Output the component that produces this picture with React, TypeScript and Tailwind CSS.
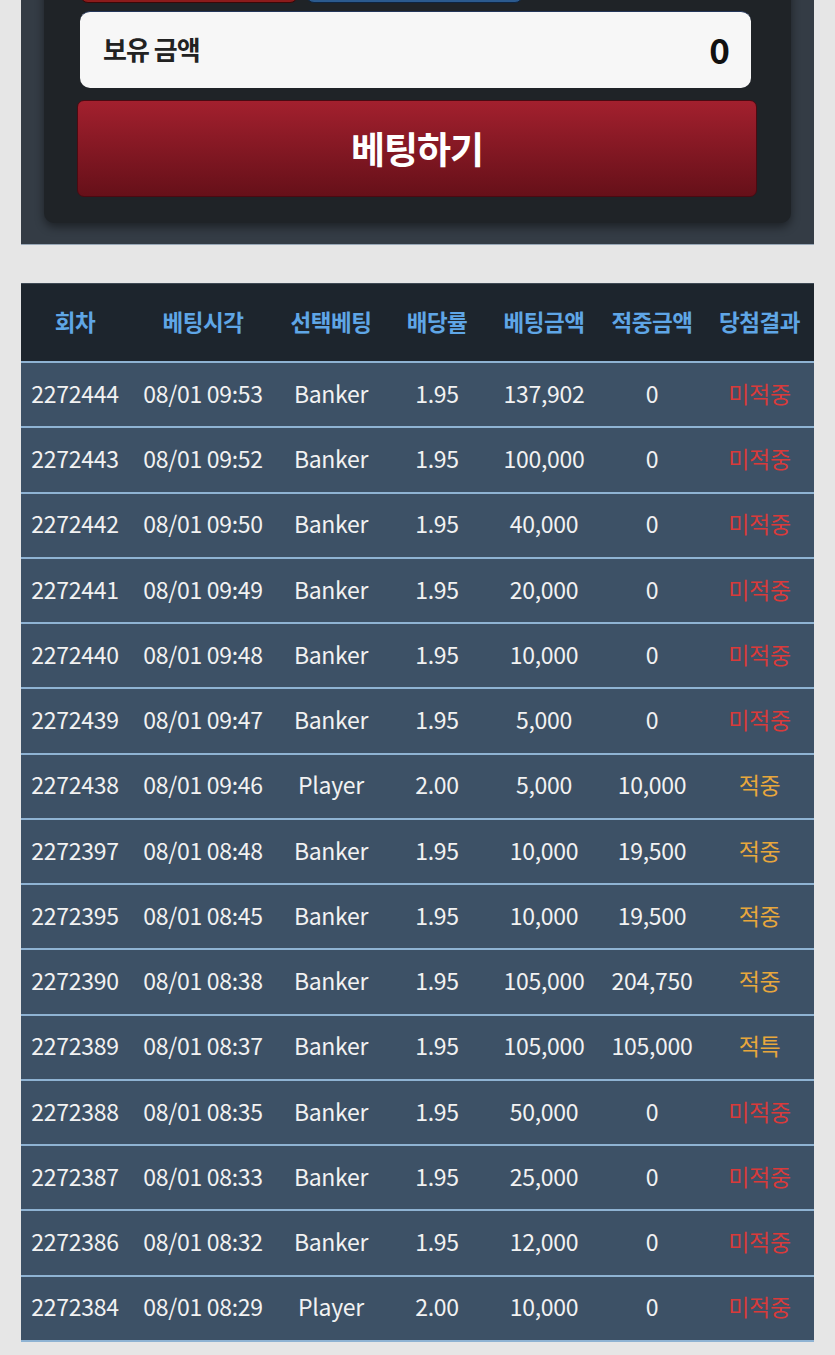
import React from "react";

type Row = [string, string, string, string, string, string, string];

const rows: Row[] = [
  ["2272444", "08/01 09:53", "Banker", "1.95", "137,902", "0", "미적중"],
  ["2272443", "08/01 09:52", "Banker", "1.95", "100,000", "0", "미적중"],
  ["2272442", "08/01 09:50", "Banker", "1.95", "40,000", "0", "미적중"],
  ["2272441", "08/01 09:49", "Banker", "1.95", "20,000", "0", "미적중"],
  ["2272440", "08/01 09:48", "Banker", "1.95", "10,000", "0", "미적중"],
  ["2272439", "08/01 09:47", "Banker", "1.95", "5,000", "0", "미적중"],
  ["2272438", "08/01 09:46", "Player", "2.00", "5,000", "10,000", "적중"],
  ["2272397", "08/01 08:48", "Banker", "1.95", "10,000", "19,500", "적중"],
  ["2272395", "08/01 08:45", "Banker", "1.95", "10,000", "19,500", "적중"],
  ["2272390", "08/01 08:38", "Banker", "1.95", "105,000", "204,750", "적중"],
  ["2272389", "08/01 08:37", "Banker", "1.95", "105,000", "105,000", "적특"],
  ["2272388", "08/01 08:35", "Banker", "1.95", "50,000", "0", "미적중"],
  ["2272387", "08/01 08:33", "Banker", "1.95", "25,000", "0", "미적중"],
  ["2272386", "08/01 08:32", "Banker", "1.95", "12,000", "0", "미적중"],
  ["2272384", "08/01 08:29", "Player", "2.00", "10,000", "0", "미적중"],
];

const headers = ["회차", "베팅시각", "선택베팅", "배당률", "베팅금액", "적중금액", "당첨결과"];

const font = { fontFamily: '"Noto Sans CJK KR", "Noto Sans", sans-serif' };

export default function App() {
  return (
    <div className="min-h-[1355px] bg-[#e6e6e6] overflow-hidden" style={font}>
      {/* Top panel */}
      <div className="ml-[21px] w-[793px] bg-[#343c45] border-b border-[#98a7b6] pb-[21px]">
        <div className="mx-[23px] bg-[#1f2327] rounded-b-[10px] shadow-[0_4px_10px_rgba(0,0,0,0.45)] pb-[26px]">
          <div className="flex gap-[8px] pl-[36px] -mt-[47px] h-[50px]">
            <div className="w-[218px] h-[50px] rounded-[8px] bg-[#8c1b1b] border border-[#3a0808]" />
            <div className="w-[217px] h-[50px] rounded-[8px] bg-[#2b5a8e] border border-[#0e2440]" />
          </div>
          <div className="ml-[36px] mt-[8px] w-[671px] h-[77px] rounded-[10px] bg-[#f7f7f7] border-t border-[#25365a] flex items-center justify-between pl-[23px] pr-[21px] pb-[4px]">
            <span className="text-[26px] font-bold text-[#222222] tracking-[-1px]">보유 금액</span>
            <span className="text-[35px] font-bold text-[#111111] leading-none">0</span>
          </div>
          <div className="ml-[33px] mt-[12px] w-[680px] h-[97px] rounded-[7px] border border-[#4a0a12] bg-gradient-to-b from-[#a3202e] to-[#661019] flex items-center justify-center">
            <span className="text-[37px] font-bold text-white tracking-[-1px]">베팅하기</span>
          </div>
        </div>
      </div>

      {/* Table */}
      <div className="ml-[21px] mt-[38px] w-[793px] bg-[#3d5166]">
        <div className="grid grid-cols-[108px_148px_108px_104px_110px_106px_109px] h-[80px] bg-[#1d252d] border-t border-[#3e4954] border-b-2 border-b-[#8fb3d3] items-center pb-[2px]">
          {headers.map((h) => (
            <div key={h} className="text-center text-[22.5px] font-bold text-[#5fa6e6] tracking-[-0.5px] whitespace-nowrap">
              {h}
            </div>
          ))}
        </div>
        {rows.map((r, i) => (
          <div
            key={i}
            className="grid grid-cols-[108px_148px_108px_104px_110px_106px_109px] h-[65.25px] border-b-2 border-[#8fb3d3] items-center text-[23px] text-[#f2f2f2] pb-[3px]"
          >
            {r.map((c, j) => {
              let cls = "text-center whitespace-nowrap tracking-[-0.3px]";
              if (j === 6) {
                cls += c === "미적중" ? " text-[#d93a3a]" : " text-[#e8a73c]";
              }
              return (
                <div key={j} className={cls}>
                  {c}
                </div>
              );
            })}
          </div>
        ))}
      </div>
    </div>
  );
}
